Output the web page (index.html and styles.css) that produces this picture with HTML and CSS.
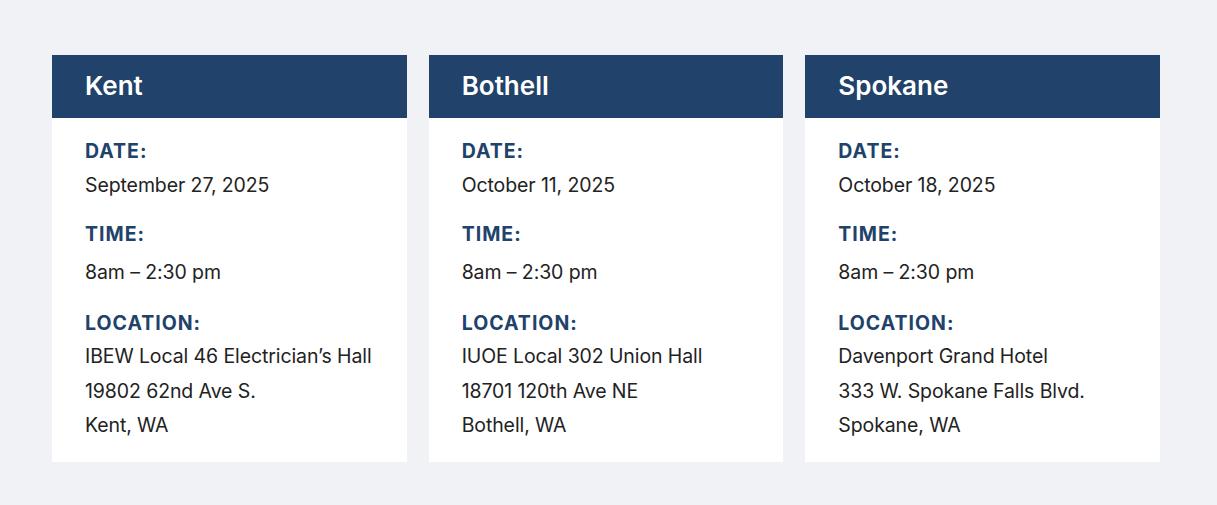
FILE: index.html
```
<!DOCTYPE html>
<html lang="en">
<head>
<meta charset="utf-8">
<title>Event Locations</title>
<link rel="stylesheet" href="styles.css">
</head>
<body>
<main class="events">
  <article class="card">
    <h2 class="card-title">Kent</h2>
    <div class="card-body">
      <div class="label">DATE:</div>
      <div class="value">September 27, 2025</div>
      <div class="label label-time">TIME:</div>
      <div class="value value-time">8am – 2:30 pm</div>
      <div class="label label-loc">LOCATION:</div>
      <div class="value">IBEW Local 46 Electrician’s Hall</div>
      <div class="value">19802 62nd Ave S.</div>
      <div class="value">Kent, WA</div>
    </div>
  </article>
  <article class="card">
    <h2 class="card-title">Bothell</h2>
    <div class="card-body">
      <div class="label">DATE:</div>
      <div class="value">October 11, 2025</div>
      <div class="label label-time">TIME:</div>
      <div class="value value-time">8am – 2:30 pm</div>
      <div class="label label-loc">LOCATION:</div>
      <div class="value">IUOE Local 302 Union Hall</div>
      <div class="value">18701 120th Ave NE</div>
      <div class="value">Bothell, WA</div>
    </div>
  </article>
  <article class="card">
    <h2 class="card-title">Spokane</h2>
    <div class="card-body">
      <div class="label">DATE:</div>
      <div class="value">October 18, 2025</div>
      <div class="label label-time">TIME:</div>
      <div class="value value-time">8am – 2:30 pm</div>
      <div class="label label-loc">LOCATION:</div>
      <div class="value">Davenport Grand Hotel</div>
      <div class="value">333 W. Spokane Falls Blvd.</div>
      <div class="value">Spokane, WA</div>
    </div>
  </article>
</main>
</body>
</html>
```
FILE: styles.css
```
html, body {
  margin: 0;
  padding: 0;
}
body {
  background: #f0f2f6;
  font-family: Inter, "Noto Sans", sans-serif;
  color: #222222;
}
.events {
  display: grid;
  grid-template-columns: repeat(3, 1fr);
  align-items: start;
  column-gap: 22px;
  width: 1108px;
  padding: 55px 0 0 52px;
}
.card {
  background: #ffffff;
}
.card-title {
  margin: 0;
  background: #21426a;
  color: #ffffff;
  height: 63px;
  box-sizing: border-box;
  padding: 0 33px 2px;
  display: flex;
  align-items: center;
  font-size: 26px;
  font-weight: 600;
  letter-spacing: 0;
}
.card-body {
  padding: 17px 20px 19.5px 33px;
}
.label {
  color: #21426a;
  font-weight: 700;
  font-size: 19.5px;
  line-height: 32px;
  letter-spacing: 1px;
}
.value {
  font-size: 19.5px;
  line-height: 34.5px;
  letter-spacing: -0.1px;
  white-space: nowrap;
  margin-top: 1px;
}
.label-time {
  margin-top: 15px;
}
.value-time {
  margin-top: 5px;
}
.label-loc {
  margin-top: 18px;
}
.label-loc ~ .value {
  margin-top: 0;
}
```
